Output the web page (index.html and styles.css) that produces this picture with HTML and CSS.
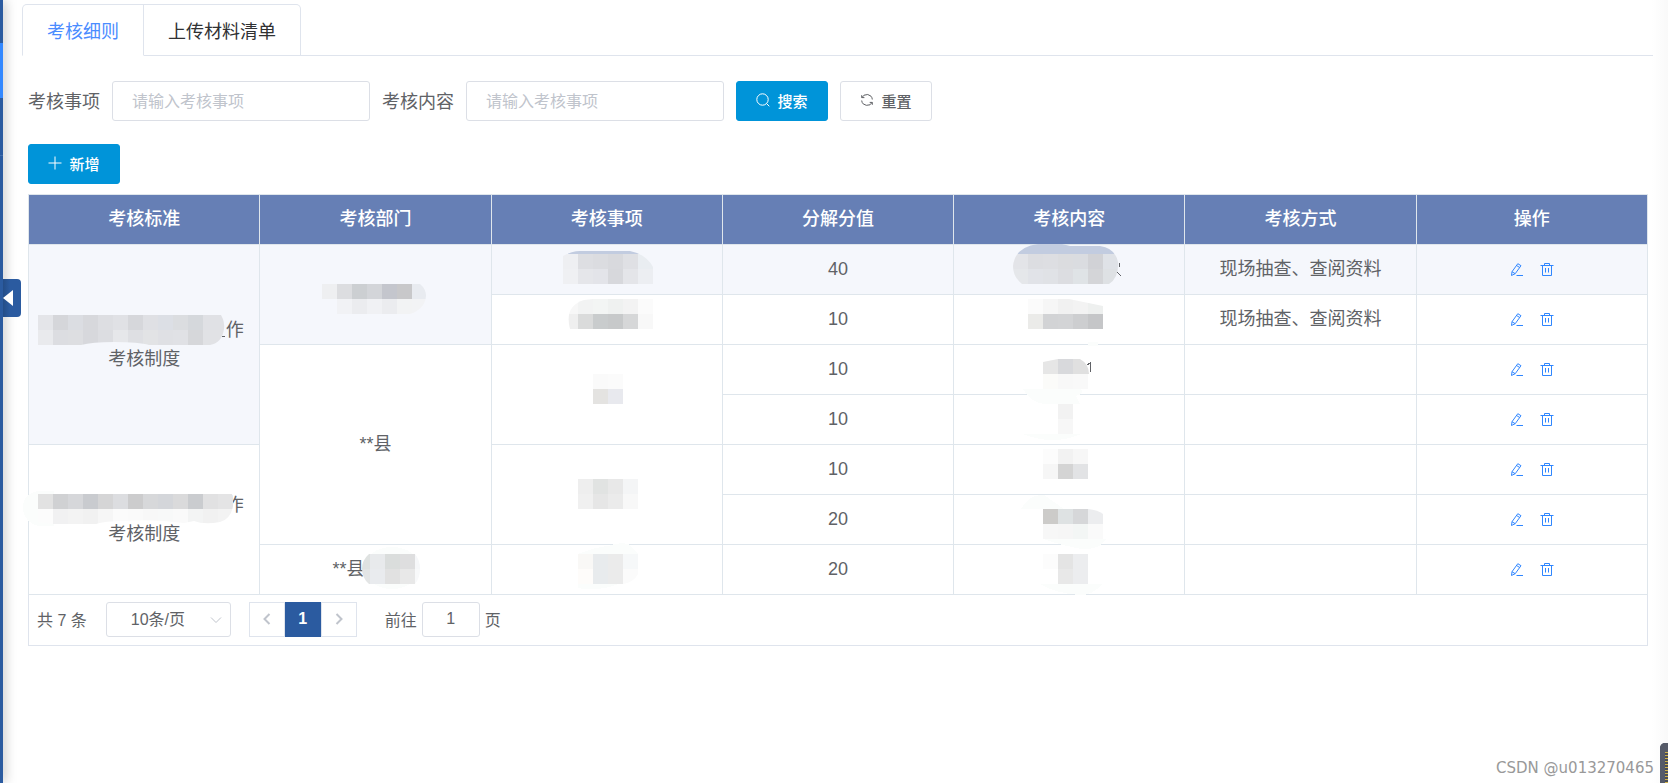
FILE: index.html
```html
<!DOCTYPE html>
<html lang="zh-CN">
<head>
<meta charset="utf-8">
<title>考核细则</title>
<link rel="stylesheet" href="styles.css">
</head>
<body>
<svg class="sprite" aria-hidden="true">
  <symbol id="icon-edit" viewBox="0 1 14 14">
    <path d="M1.500 13.500L2 9.700L7.800 1.700L11 3.700L5.200 11.700zM2 9.700L5.200 11.700M6.500 3.500L9.700 5.500M6.500 13.500H13"/>
  </symbol>
  <symbol id="icon-delete" viewBox="0 1 14 14">
    <path d="M0.500 3.500H13.500M4.500 3.500V1.500H9.500V3.500M2.500 3.500V13.500H11.500V3.500M5.500 6V10.500M8.500 6V10.500"/>
  </symbol>
</svg>
<div class="app">
  <aside class="sidebar">
    <span class="sidebar-active"></span>
    <span class="sidebar-line"></span>
    <button class="collapse" type="button" aria-label="收起菜单"><svg viewBox="0 0 10 16"><path d="M10 0V16L0 8z"/></svg></button>
  </aside>
  <main class="main">
    <nav class="tabs">
      <button class="tab tab-active" type="button">考核细则</button>
      <button class="tab" type="button">上传材料清单</button>
    </nav>
    <div class="content">
      <form class="filters">
        <div class="field"><label for="item">考核事项</label><input id="item" class="text-input" type="text" placeholder="请输入考核事项"></div>
        <div class="field"><label for="detail">考核内容</label><input id="detail" class="text-input" type="text" placeholder="请输入考核事项"></div>
        <button class="btn btn-primary" type="button"><svg viewBox="0 0 14 14"><circle cx="6.500" cy="6.500" r="5.700"/><path d="M10.500 10.500L13.300 13.300"/></svg>搜索</button>
        <button class="btn" type="button"><svg viewBox="0 0 14 14"><path d="M4 2.200Q8 0.300 11 3.200Q12.300 4.700 12.300 6.500M1.700 2.200V4.600H4.400M1.700 7.500Q1.800 9.500 3.200 10.900Q6 13.300 10 11.800M12.300 11.800V9.400H9.700M2 4.500L4 2.200M12 9.500L10 11.800"/></svg>重置</button>
      </form>
      <div class="toolbar">
        <button class="btn btn-primary" type="button"><svg viewBox="0 0 14 14"><path d="M7 0.500V13.500M0.500 7H13.500"/></svg>新增</button>
      </div>
      <table class="grid">
        <thead>
          <tr><th>考核标准</th><th>考核部门</th><th>考核事项</th><th>分解分值</th><th>考核内容</th><th>考核方式</th><th>操作</th></tr>
        </thead>
        <tbody>
          <tr class="row-hover">
            <td rowspan="4">
              <div class="line">
                <svg class="mosaic mosaic-line" viewBox="1 1 181 29">
                  <clipPath id="c1"><path d="M-6 0H177Q181 7 180 14Q178 28 166 30H105Q95 27 70 27Q48 27 37 30H-6z"/></clipPath>
                  <g clip-path="url(#c1)">
                    <path stroke="#e4e5e9" d="M-6 7.500h15"/><path stroke="#d5d6da" d="M9 7.500h15"/><path stroke="#dbdde2" d="M24 7.500h15"/><path stroke="#d7d8dc" d="M39 7.500h15"/><path stroke="#dddee2" d="M54 7.500h15"/><path stroke="#e0e1e5" d="M69 7.500h15"/><path stroke="#d6d7db" d="M84 7.500h15"/><path stroke="#dfe0e4" d="M99 7.500h15"/><path stroke="#dcdfe5" d="M114 7.500h15"/><path stroke="#dbdde0" d="M129 7.500h15"/><path stroke="#d5d8dc" d="M144 7.500h15"/><path stroke="#e0e1e5" d="M159 7.500h22"/>
                    <path stroke="#e9eaed" d="M-6 22.500h15"/><path stroke="#dcdde1" d="M9 22.500h15"/><path stroke="#dddee1" d="M24 22.500h15"/><path stroke="#d7d8dc" d="M39 22.500h15"/><path stroke="#dcdde1" d="M54 22.500h15"/><path stroke="#e6e7ea" d="M69 22.500h15"/><path stroke="#dedfe3" d="M84 22.500h15"/><path stroke="#e2e3e5" d="M99 22.500h15"/><path stroke="#dfe0e4" d="M114 22.500h15"/><path stroke="#e0e1e5" d="M129 22.500h15"/><path stroke="#d6d7da" d="M144 22.500h15"/><path stroke="#e1e2e5" d="M159 22.500h22"/>
                  </g>
                  <path class="stub" d="M178 21.500h3"/>
                </svg>作
              </div>
              <div class="line">考核制度</div>
            </td>
            <td rowspan="2">
              <svg class="mosaic" viewBox="0 1 230 49">
                <clipPath id="c2"><path d="M62 15H160Q166 20 166 27Q165 40 150 45H62z"/></clipPath>
                <g clip-path="url(#c2)">
                  <path stroke="#eeeff1" d="M62 22.500h15"/><path stroke="#dcdde0" d="M77 22.500h15"/><path stroke="#cccfd2" d="M92 22.500h15"/><path stroke="#d3d5d9" d="M107 22.500h15"/><path stroke="#c4c6cd" d="M122 22.500h15"/><path stroke="#c8c8ca" d="M137 22.500h15"/><path stroke="#e8ebf0" d="M152 22.500h14"/>
                  <path stroke="#f1f2f5" d="M77 37.500h15"/><path stroke="#ebecef" d="M92 37.500h15"/><path stroke="#f0f1f4" d="M107 37.500h15"/><path stroke="#ebecef" d="M122 37.500h15"/><path stroke="#f2f3f4" d="M137 37.500h15"/><path stroke="#f2f3f5" d="M152 37.500h14"/>
                </g>
              </svg>
            </td>
            <td>
              <svg class="mosaic" viewBox="0 1 230 49">
                <clipPath id="c3"><path d="M71 12Q80 7 88 7H138Q154 10 161 23V40H71z"/></clipPath>
                <g clip-path="url(#c3)">
                  <path class="strip" d="M76 7H148V10H76z"/>
                  <path stroke="#eeeff2" d="M71 17.500h15"/><path stroke="#dddee2" d="M86 17.500h15"/><path stroke="#dbdce0" d="M101 17.500h15"/><path stroke="#d8d9dd" d="M116 17.500h15"/><path stroke="#dfe0e4" d="M131 17.500h15"/><path stroke="#e9edf1" d="M146 17.500h15"/>
                  <path stroke="#eff0f3" d="M71 32.500h15"/><path stroke="#e5e6ea" d="M86 32.500h15"/><path stroke="#e3e4e9" d="M101 32.500h15"/><path stroke="#d7d8dc" d="M116 32.500h15"/><path stroke="#e4e5e9" d="M131 32.500h15"/><path stroke="#eceef2" d="M146 32.500h15"/>
                </g>
              </svg>
            </td>
            <td>40</td>
            <td>
              <svg class="mosaic" viewBox="0 1 230 49">
                <clipPath id="c4"><path d="M59 22Q61 3 84 0H108L116 2H146Q161 4 164 18Q165 34 155 40H68Q59 33 59 22z"/></clipPath>
                <g clip-path="url(#c4)">
                  <path class="strip" d="M59 0H165V10H59z"/>
                  <path stroke="#e3e4e8" d="M59 17.500h15"/><path stroke="#dcdde1" d="M74 17.500h15"/><path stroke="#dddee2" d="M89 17.500h15"/><path stroke="#dbdcdf" d="M104 17.500h15"/><path stroke="#dadce0" d="M119 17.500h15"/><path stroke="#d1d2d6" d="M134 17.500h15"/><path stroke="#dfe2e7" d="M149 17.500h16"/>
                  <path stroke="#e5e7ea" d="M59 32.500h15"/><path stroke="#e1e3e8" d="M74 32.500h15"/><path stroke="#e0e2e6" d="M89 32.500h15"/><path stroke="#dcdde1" d="M104 32.500h15"/><path stroke="#dfe3e6" d="M119 32.500h15"/><path stroke="#d4d5d8" d="M134 32.500h15"/><path stroke="#dee1e4" d="M149 32.500h16"/>
                </g>
                <path class="stub" d="M166 19l-1 4M163 28l4 4"/>
              </svg>
            </td>
            <td>现场抽查、查阅资料</td>
            <td><div class="actions"><button type="button" aria-label="编辑"><svg><use href="#icon-edit"/></svg></button><button type="button" aria-label="删除"><svg><use href="#icon-delete"/></svg></button></div></td>
          </tr>
          <tr>
            <td>
              <svg class="mosaic" viewBox="0 1 230 49">
                <clipPath id="c5"><path d="M78 35Q72 12 92 6L110 4L161 5V35z"/></clipPath>
                <g clip-path="url(#c5)">
                  <path stroke="#f7f7f7" d="M74 12.500h12"/><path stroke="#f2f3f3" d="M86 12.500h15"/><path stroke="#f3f5f4" d="M101 12.500h15"/><path stroke="#eff1f0" d="M116 12.500h15"/><path stroke="#f3f3f3" d="M131 12.500h15"/><path stroke="#fbfbfb" d="M146 12.500h15"/>
                  <path stroke="#efefef" d="M74 27.500h12"/><path stroke="#dadbdb" d="M86 27.500h15"/><path stroke="#c9cccd" d="M101 27.500h15"/><path stroke="#c7c9ca" d="M116 27.500h15"/><path stroke="#d6d7d8" d="M131 27.500h15"/><path stroke="#f8f8f8" d="M146 27.500h15"/>
                </g>
              </svg>
            </td>
            <td>10</td>
            <td>
              <svg class="mosaic" viewBox="0 1 230 49">
                <clipPath id="c6"><path d="M74 5H115L149 12V35H74z"/></clipPath>
                <g clip-path="url(#c6)">
                  <path stroke="#fbfbfb" d="M74 12.500h15"/><path stroke="#f6f6f6" d="M89 12.500h15"/><path stroke="#f1f1f1" d="M104 12.500h15"/><path stroke="#f3f3f3" d="M119 12.500h15"/><path stroke="#eef0ef" d="M134 12.500h15"/>
                  <path stroke="#ebebe9" d="M74 27.500h15"/><path stroke="#d2d3d5" d="M89 27.500h15"/><path stroke="#d3d4d6" d="M104 27.500h15"/><path stroke="#cdced0" d="M119 27.500h15"/><path stroke="#c5c6c8" d="M134 27.500h15"/>
                </g>
                <path class="halo" d="M134 48h10v4h-10z"/>
              </svg>
            </td>
            <td>现场抽查、查阅资料</td>
            <td><div class="actions"><button type="button" aria-label="编辑"><svg><use href="#icon-edit"/></svg></button><button type="button" aria-label="删除"><svg><use href="#icon-delete"/></svg></button></div></td>
          </tr>
          <tr>
            <td rowspan="4">**县</td>
            <td rowspan="2">
              <svg class="mosaic" viewBox="0 1 230 49">
                <path stroke="#fafafa" d="M101 12.500h15"/><path stroke="#fbfbfb" d="M116 12.500h15"/>
                <path stroke="#e4e3e1" d="M101 27.500h15"/><path stroke="#e8e9ee" d="M116 27.500h15"/>
              </svg>
            </td>
            <td>10</td>
            <td>
              <svg class="mosaic" viewBox="0 1 230 49">
                <path class="stub" d="M133 21l3-2v9"/>
                <path class="halo" d="M69 45h58q4 4 -5 7l4 8H90q-14-2-21-15z"/>
                <clipPath id="c7"><path d="M89 18L104 15H126Q135 20 135 30V45H89z"/></clipPath>
                <g clip-path="url(#c7)">
                  <path stroke="#e6e6e6" d="M89 22.500h15"/><path stroke="#d8d9dc" d="M104 22.500h15"/><path stroke="#e0e0e0" d="M119 22.500h16"/>
                  <path stroke="#fbfbf9" d="M89 37.500h15"/><path stroke="#f8f8f8" d="M104 37.500h15"/><path stroke="#f9f9f9" d="M119 37.500h15"/>
                </g>
              </svg>
            </td>
            <td></td>
            <td><div class="actions"><button type="button" aria-label="编辑"><svg><use href="#icon-edit"/></svg></button><button type="button" aria-label="删除"><svg><use href="#icon-delete"/></svg></button></div></td>
          </tr>
          <tr>
            <td>10</td>
            <td>
              <svg class="mosaic" viewBox="0 1 230 49">
                <path class="halo" d="M69 40h58q-28 12-58 0z"/>
                <path stroke="#f2f2f2" d="M104 17.500h15"/><path stroke="#f7f7f7" d="M104 32.500h15"/>
              </svg>
            </td>
            <td></td>
            <td><div class="actions"><button type="button" aria-label="编辑"><svg><use href="#icon-edit"/></svg></button><button type="button" aria-label="删除"><svg><use href="#icon-delete"/></svg></button></div></td>
          </tr>
          <tr>
            <td rowspan="3">
              <div class="line">
                <svg class="mosaic mosaic-line" viewBox="1 1 181 29">
                  <path class="halo" d="M-6 1Q-21 4 -21 18Q-20 32 -6 36H10V1z"/>
                  <clipPath id="c8"><path d="M-6 4H188Q190 10 189 16Q187 29 176 32Q160 35 150 31L140 33Q110 29 80 31Q60 31 52 34H9L-6 32z"/></clipPath>
                  <g clip-path="url(#c8)">
                    <path stroke="#e2e2e2" d="M-6 11.500h15"/><path stroke="#d0d1d3" d="M9 11.500h15"/><path stroke="#d6d7da" d="M24 11.500h15"/><path stroke="#c9cbcf" d="M39 11.500h15"/><path stroke="#d5d5d6" d="M54 11.500h15"/><path stroke="#dcdde0" d="M69 11.500h15"/><path stroke="#cccccd" d="M84 11.500h15"/><path stroke="#d7d8da" d="M99 11.500h15"/><path stroke="#d4d6da" d="M114 11.500h15"/><path stroke="#dadadb" d="M129 11.500h15"/><path stroke="#cacccf" d="M144 11.500h15"/><path stroke="#e1e1e2" d="M159 11.500h15"/><path stroke="#e4e4e5" d="M174 11.500h15"/>
                    <path stroke="#fcfcfc" d="M-6 26.500h15"/><path stroke="#f1f1f2" d="M9 26.500h15"/><path stroke="#f3f3f3" d="M24 26.500h15"/><path stroke="#f1f1f1" d="M39 26.500h15"/><path stroke="#f6f6f6" d="M54 26.500h15"/><path stroke="#fbfbfb" d="M69 26.500h15"/><path stroke="#fafafa" d="M84 26.500h15"/><path stroke="#f8f8f8" d="M99 26.500h15"/><path stroke="#f8f9f9" d="M114 26.500h15"/><path stroke="#fafafa" d="M129 26.500h15"/><path stroke="#f3f4f4" d="M144 26.500h15"/><path stroke="#f1f1f1" d="M159 26.500h15"/><path stroke="#f3f3f3" d="M174 26.500h15"/>
                  </g>
                </svg>作
              </div>
              <div class="line">考核制度</div>
            </td>
            <td rowspan="2">
              <svg class="mosaic" viewBox="0 1 230 49">
                <path stroke="#eeeeee" d="M86 17.500h15"/><path stroke="#e1e3e2" d="M101 17.500h15"/><path stroke="#e8e8e8" d="M116 17.500h15"/><path stroke="#f4f5f6" d="M131 17.500h15"/>
                <path stroke="#f0f0f0" d="M86 32.500h15"/><path stroke="#e6e6e6" d="M101 32.500h15"/><path stroke="#ebebeb" d="M116 32.500h15"/><path stroke="#f8f8f8" d="M131 32.500h15"/>
              </svg>
            </td>
            <td>10</td>
            <td>
              <svg class="mosaic" viewBox="0 1 230 49">
                <path stroke="#fcfcfc" d="M89 12.500h15"/><path stroke="#f2f2f2" d="M104 12.500h15"/><path stroke="#f7f7f7" d="M119 12.500h15"/>
                <path stroke="#f6f6f6" d="M89 27.500h15"/><path stroke="#d4d4d4" d="M104 27.500h15"/><path stroke="#e2e3e5" d="M119 27.500h15"/>
              </svg>
            </td>
            <td></td>
            <td><div class="actions"><button type="button" aria-label="编辑"><svg><use href="#icon-edit"/></svg></button><button type="button" aria-label="删除"><svg><use href="#icon-delete"/></svg></button></div></td>
          </tr>
          <tr>
            <td>20</td>
            <td>
              <svg class="mosaic" viewBox="0 1 230 49">
                <path class="halo" d="M67 15Q76 0 90 1L110 15zM89 45H152Q146 56 128 55Q110 52 89 45z"/>
                <clipPath id="c9"><path d="M89 15H134Q144 16 149 20V45H89z"/></clipPath>
                <g clip-path="url(#c9)">
                  <path stroke="#cccbc9" d="M89 22.500h15"/><path stroke="#dee2e3" d="M104 22.500h15"/><path stroke="#d6d7d9" d="M119 22.500h15"/><path stroke="#ecedef" d="M134 22.500h15"/>
                  <path stroke="#f7f7f7" d="M89 37.500h15"/><path stroke="#f6f6f6" d="M104 37.500h15"/><path stroke="#f3f6f5" d="M119 37.500h15"/><path stroke="#fafafa" d="M134 37.500h15"/>
                </g>
              </svg>
            </td>
            <td></td>
            <td><div class="actions"><button type="button" aria-label="编辑"><svg><use href="#icon-edit"/></svg></button><button type="button" aria-label="删除"><svg><use href="#icon-delete"/></svg></button></div></td>
          </tr>
          <tr>
            <td>
              <div class="line">**县
                <svg class="mosaic mosaic-end" viewBox="0 1 54 49">
                  <ellipse class="halo" cx="28" cy="24" rx="28" ry="21"/>
                  <clipPath id="c10"><path d="M5 10H51Q56 16 56 25Q56 34 51 40H5Q-2 34 -2 25Q-2 16 5 10z"/></clipPath>
                  <g clip-path="url(#c10)">
                    <path stroke="#dfe2e1" d="M-2 17.500h8"/><path stroke="#e8eaec" d="M6 17.500h15"/><path stroke="#dadddc" d="M21 17.500h15"/><path stroke="#dededf" d="M36 17.500h15"/><path stroke="#f6f7f9" d="M51 17.500h5"/>
                    <path stroke="#e3e5e5" d="M-2 32.500h8"/><path stroke="#e9ebee" d="M6 32.500h15"/><path stroke="#e1e1e1" d="M21 32.500h15"/><path stroke="#e8e8e8" d="M36 32.500h15"/><path stroke="#f8f9fa" d="M51 32.500h5"/>
                  </g>
                </svg>
              </div>
            </td>
            <td>
              <svg class="mosaic" viewBox="0 1 230 49">
                <path class="halo" d="M86 10Q104 3 116 2Q130 -3 138 1L146 10zM86 40h40q-20 8-40 4z"/>
                <clipPath id="c11"><path d="M86 10H146V30Q142 38 131 40H86z"/></clipPath>
                <g clip-path="url(#c11)">
                  <path stroke="#f9f8f6" d="M86 17.500h15"/><path stroke="#e8ebed" d="M101 17.500h15"/><path stroke="#ebebeb" d="M116 17.500h15"/><path stroke="#f6f8f9" d="M131 17.500h15"/>
                  <path stroke="#fefcfa" d="M86 32.500h15"/><path stroke="#e8ebed" d="M101 32.500h15"/><path stroke="#ebebeb" d="M116 32.500h15"/><path stroke="#fbfbfb" d="M131 32.500h15"/>
                </g>
              </svg>
            </td>
            <td>20</td>
            <td>
              <svg class="mosaic" viewBox="0 1 230 49">
                <path class="halo" d="M86 40H148Q138 52 126 51Q104 50 86 40z"/>
                <path stroke="#fcfcfc" d="M89 17.500h15"/><path stroke="#e4e4e4" d="M104 17.500h15"/><path stroke="#ecedef" d="M119 17.500h15"/>
                <path stroke="#e8e8e8" d="M104 32.500h15"/><path stroke="#ecedef" d="M119 32.500h15"/>
              </svg>
            </td>
            <td></td>
            <td><div class="actions"><button type="button" aria-label="编辑"><svg><use href="#icon-edit"/></svg></button><button type="button" aria-label="删除"><svg><use href="#icon-delete"/></svg></button></div></td>
          </tr>
        </tbody>
      </table>
      <div class="pagination">
        <span>共 7 条</span>
        <div class="page-size">
          <select aria-label="每页条数"><option>10条/页</option></select>
          <svg viewBox="0 0 12 12"><path d="M1 3.500L6 8.500L11 3.500"/></svg>
        </div>
        <div class="pager">
          <button type="button" aria-label="上一页"><svg viewBox="0 0 12 12"><path d="M8.500 1L3.500 6L8.500 11"/></svg></button>
          <button class="page-current" type="button">1</button>
          <button type="button" aria-label="下一页"><svg viewBox="0 0 12 12"><path d="M3.500 1L8.500 6L3.500 11"/></svg></button>
        </div>
        <div class="jump"><label for="page">前往</label><input id="page" type="text" value="1"><span>页</span></div>
      </div>
    </div>
  </main>
  <div class="watermark">CSDN @u013270465</div>
  <div class="dock"></div>
</div>
</body>
</html>
```
FILE: styles.css
```css
* { box-sizing: border-box; }

body {
  margin: 0;
  background: #fff;
  color: #606266;
  font-family: "Liberation Sans", "Noto Sans CJK SC", sans-serif;
  font-size: 18px;
}

button, input, select { font-family: inherit; color: inherit; }
button { cursor: pointer; }

.sprite { position: absolute; width: 0; height: 0; }

.app {
  position: relative;
  display: flex;
  min-height: 100vh;
  overflow: hidden;
  background: linear-gradient(to left, #f9f9f9, #fff 16px);
}

.sidebar {
  position: relative;
  flex: none;
  width: 3px;
  background: #2b5ba0;
  box-shadow: 0 0 12px rgba(0, 0, 0, 0.6);
}

.sidebar-active { display: block; height: 55px; margin-top: 43px; background: #3388ff; }
.sidebar-line { display: block; height: 1px; margin-top: 57px; background: #4470ae; }

.collapse {
  position: absolute;
  top: 279px;
  left: 3px;
  display: flex;
  align-items: center;
  width: 18px;
  height: 38px;
  padding: 0;
  border: 0;
  border-radius: 0 4px 4px 0;
  background: linear-gradient(to right, #244d87, #2b5ba0 7px);
}
.collapse svg { width: 10px; height: 16px; fill: #fff; }

.main { flex: 1; min-width: 0; padding-top: 4px; }

.tabs {
  display: flex;
  height: 52px;
  margin: 0 15px 0 19px;
  border-bottom: 1px solid #dfe4ed;
}
.tab {
  height: 52px;
  padding: 0 24px;
  border: 1px solid #dfe4ed;
  border-left: 0;
  border-radius: 0 5px 0 0;
  background: #fff;
  color: #303133;
  font-size: 18px;
}
.tab-active {
  border-left: 1px solid #dfe4ed;
  border-bottom-color: #fff;
  border-radius: 5px 0 0 0;
  color: #4a8cff;
}

.content { padding: 25px 20px 0 25px; }

.filters { display: flex; align-items: center; gap: 12px; }
.field { display: flex; align-items: center; gap: 12px; }
.field label { padding-bottom: 2px; }

.text-input {
  width: 258px;
  height: 40px;
  padding: 2px 19px 0;
  border: 1px solid #dcdfe6;
  border-radius: 3px;
  background: #fff;
  font-size: 16px;
}
.text-input::placeholder { color: #c0c4cc; }

.btn {
  display: inline-flex;
  align-items: center;
  justify-content: center;
  gap: 7px;
  width: 92px;
  height: 40px;
  padding: 0 0 2px;
  border: 1px solid #dcdfe6;
  border-radius: 3px;
  background: #fff;
  font-size: 15px;
  font-weight: 500;
}
.btn svg { width: 14px; height: 14px; fill: none; stroke: currentColor; }
.btn-primary { border-color: #0094d9; background: #0094d9; color: #fff; }

.toolbar { display: flex; margin: 23px 0 10px; }

.grid {
  width: 100%;
  table-layout: fixed;
  border-collapse: collapse;
}
.grid th, .grid td {
  height: 50px;
  padding: 0;
  border: 1px solid #dfe6ec;
  text-align: center;
  vertical-align: middle;
  line-height: 29px;
}
.grid th { background: #667fb5; color: #fff; font-weight: 500; }
.row-hover td { background: #f5f7fc; }

.line { display: flex; align-items: center; justify-content: center; height: 29px; }

.mosaic {
  position: relative;
  display: block;
  flex: none;
  width: 230px;
  height: 49px;
  margin: 0 auto;
  overflow: visible;
  fill: none;
  stroke-width: 15;
  shape-rendering: crispEdges;
}
.mosaic-line { width: 181px; height: 29px; margin: 0; }
.mosaic-end { width: 54px; margin: 0; }
.strip { fill: #c2cce0; }
.halo { fill: #fbfdfc; }
.stub { stroke: #606266; stroke-width: 1; }

.actions { display: flex; justify-content: center; gap: 16px; }
.actions button { display: flex; padding: 0; border: 0; background: none; color: #2f86ff; }
.actions svg { width: 14px; height: 14px; fill: none; stroke: currentColor; }

.pagination {
  display: flex;
  align-items: center;
  height: 51px;
  padding: 0 8px 2px;
  border: 1px solid #dfe4ed;
  border-top: 0;
  font-size: 16px;
}
.page-size { position: relative; margin: 0 18px 0 19px; }
.page-size select {
  width: 125px;
  height: 35px;
  padding: 0 24px;
  border: 1px solid #dcdfe6;
  border-radius: 3px;
  background: #fff;
  font-size: 16px;
  appearance: none;
}
.page-size svg { position: absolute; top: 12px; right: 9px; }
.pagination svg { width: 12px; height: 12px; fill: none; stroke: #c0c4cc; }

.pager { display: flex; }
.pager button {
  display: flex;
  align-items: center;
  justify-content: center;
  width: 36px;
  height: 35px;
  padding: 0;
  border: 1px solid #dfe4ed;
  background: #fff;
  font-size: 16px;
}
.pager svg { stroke-width: 2; }
.pager .page-current { border-color: #2b5ba0; background: #2b5ba0; color: #fff; font-weight: 700; }

.jump { display: flex; align-items: center; gap: 5px; margin-left: 28px; }
.jump input {
  width: 58px;
  height: 35px;
  padding: 0;
  border: 1px solid #dcdfe6;
  border-radius: 3px;
  font-size: 16px;
  text-align: center;
}

.watermark {
  position: absolute;
  right: 14px;
  bottom: 6px;
  color: #999;
  font-family: "DejaVu Sans", sans-serif;
  font-size: 15px;
}

.dock {
  position: absolute;
  right: 0;
  bottom: 0;
  width: 8px;
  height: 40px;
  border: solid #555a68;
  border-width: 9px 0 0 5px;
  border-radius: 5px 0 0 0;
  background: repeating-linear-gradient(#d0b24a 0 1px, #4a4e58 1px 3px);
}
```
